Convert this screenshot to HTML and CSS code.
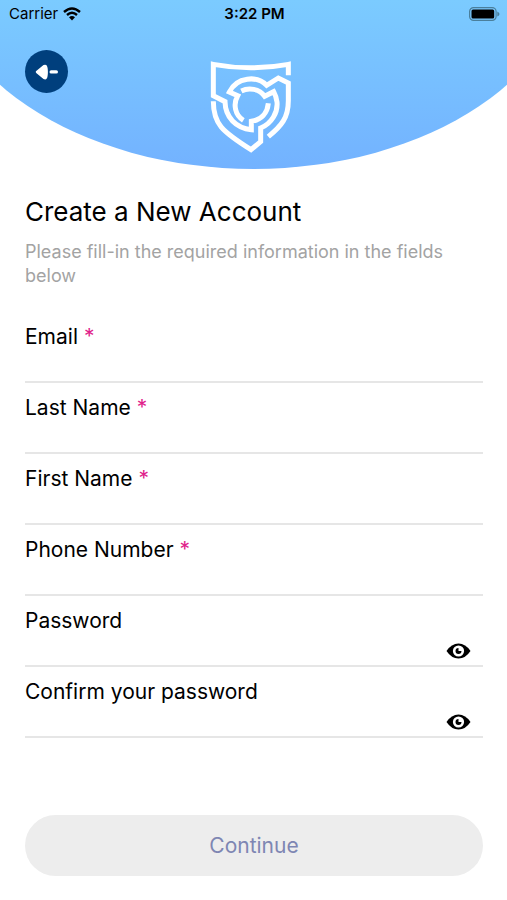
FILE: index.html
```
<!DOCTYPE html>
<html lang="en">
<head>
    <meta charset="UTF-8">
    <meta name="viewport" content="width=device-width, initial-scale=1.0">
    <title>Create a New Account</title>
    <link rel="stylesheet" href="styles.css">
</head>
<body>
    <header class="header">
        <div class="status-bar">
            <div class="carrier">
                <span>Carrier</span>
                <svg class="wifi" viewBox="0 0 18 14" aria-hidden="true">
                    <path d="M1 5 Q9 -2 17 5" />
                    <path d="M4 8 Q9 3.600 14 8" />
                    <path class="wifi-dot" d="M6 10.200 Q9 7.600 12 10.200 L9 13.500 Z" />
                </svg>
            </div>
            <div class="time">3:22 PM</div>
            <div class="battery">
                <svg viewBox="0 0 31 14" aria-hidden="true">
                    <rect class="battery-case" x="0.600" y="0.600" width="26.500" height="12.800" rx="4" />
                    <rect x="2.500" y="2.500" width="22.700" height="9" rx="1.500" />
                    <path class="battery-tip" d="M28.300 4.500 Q30.500 5.500 30.500 7 Q30.500 8.500 28.300 9.500 Z" />
                </svg>
            </div>
        </div>
        <div class="header-row">
            <button class="back" type="button" aria-label="Back">
                <svg viewBox="0 0 24 16" aria-hidden="true">
                    <path d="M1.500 6.800 L8.500 1 Q12 -0.500 12.600 4 Q13.200 8 12.600 12 Q12 16.500 8.500 15 L1.500 9.200 Q0 8 1.500 6.800 Z" />
                    <rect x="14.500" y="6.200" width="8.500" height="3.400" rx="1.700" />
                </svg>
            </button>
            <svg class="logo" viewBox="60 45 246 285" aria-hidden="true">
                <path d="M295 94 V61 Q182 82 70 61 V155 L105 173 C106 220 138 253 184 257 V232 C214 228 232 208 235 178" />
                <path d="M70 172 C70 240 96 262 183 317 L212 293 V252 C246 238 264 204 261 174 Q259 158 251 143 L224 157 C208 134 176 130 154 141" />
                <path d="M160 229 C136 214 128 182 143 155 L118 144 C140 98 202 94 230 124 L265 102 L295 117 V170 C295 222 274 246 235 278" />
            </svg>
        </div>
    </header>

    <main class="content">
        <h1>Create a New Account</h1>
        <p class="intro">Please fill-in the required information in the fields below</p>

        <form class="form">
            <div class="field">
                <label for="email">Email <span class="required">*</span></label>
                <input id="email" type="email" required>
            </div>
            <div class="field">
                <label for="last-name">Last Name <span class="required">*</span></label>
                <input id="last-name" type="text" required>
            </div>
            <div class="field">
                <label for="first-name">First Name <span class="required">*</span></label>
                <input id="first-name" type="text" required>
            </div>
            <div class="field">
                <label for="phone">Phone Number <span class="required">*</span></label>
                <input id="phone" type="tel" required>
            </div>
            <div class="field">
                <label for="password">Password</label>
                <div class="password-row">
                    <input id="password" type="password">
                    <button class="eye" type="button" aria-label="Show password">
                        <svg viewBox="0 0 24 16" aria-hidden="true">
                            <path d="M0 8 Q5 0.500 12 0.500 Q19 0.500 24 8 Q19 15.500 12 15.500 Q5 15.500 0 8 Z" />
                            <circle class="eye-white" cx="12" cy="8" r="5.600" />
                            <path d="M12 5 A3 3 0 1 0 15 8 H12 Z" />
                        </svg>
                    </button>
                </div>
            </div>
            <div class="field">
                <label for="confirm">Confirm your password</label>
                <div class="password-row">
                    <input id="confirm" type="password">
                    <button class="eye" type="button" aria-label="Show password">
                        <svg viewBox="0 0 24 16" aria-hidden="true">
                            <path d="M0 8 Q5 0.500 12 0.500 Q19 0.500 24 8 Q19 15.500 12 15.500 Q5 15.500 0 8 Z" />
                            <circle class="eye-white" cx="12" cy="8" r="5.600" />
                            <path d="M12 5 A3 3 0 1 0 15 8 H12 Z" />
                        </svg>
                    </button>
                </div>
            </div>
            <button class="continue" type="submit">Continue</button>
        </form>
    </main>
</body>
</html>
```
FILE: styles.css
```
* {
    box-sizing: border-box;
}

body {
    margin: 0;
    min-height: 100vh;
    display: flex;
    flex-direction: column;
    background: #fff;
    color: #000;
    font-family: Inter, "Open Sans", sans-serif;
}

button {
    border: none;
    padding: 0;
    font-family: inherit;
    cursor: pointer;
}

svg {
    display: block;
}

/* Blue header with the curved bottom edge */
.header {
    padding-bottom: 15px;
    background: linear-gradient(to bottom, #7bcbff, #73b2ff);
    clip-path: ellipse(63% 215px at 50% -46px);
}

.status-bar {
    display: grid;
    grid-template-columns: 1fr auto 1fr;
    align-items: center;
    height: 28px;
    padding: 0 7px 0 9px;
    font-size: 15px;
    line-height: 20px;
}

.carrier {
    display: flex;
    align-items: center;
    gap: 5px;
}

.wifi {
    width: 18px;
    height: 14px;
    fill: none;
    stroke: #000;
    stroke-width: 2.4;
}

.wifi-dot {
    fill: #000;
    stroke: none;
}

.time {
    font-weight: 600;
}

.battery svg {
    width: 31px;
    height: 14px;
    margin-left: auto;
}

.battery-case {
    fill: none;
    stroke: #4a7f9c;
    stroke-width: 1.2;
}

.battery-tip {
    fill: #4a7f9c;
}

.header-row {
    display: grid;
    grid-template-columns: 1fr auto 1fr;
    align-items: start;
    padding: 22px 31px 0 25px;
}

.back {
    display: flex;
    align-items: center;
    justify-content: center;
    width: 43px;
    height: 43px;
    border-radius: 50%;
    background: #003f7d;
}

.back svg {
    width: 24px;
    height: 16px;
    fill: #fff;
}

.logo {
    width: 82px;
    height: 95px;
    margin-top: 9px;
    fill: none;
    stroke: #fff;
    stroke-width: 15;
}

.content {
    flex: 1;
    display: flex;
    flex-direction: column;
    padding: 27px 24px 24px 25px;
}

h1 {
    margin: 0;
    font-size: 26px;
    line-height: 32px;
    font-weight: 400;
}

.intro {
    margin: 12px 0 24px;
    color: #a3a3a3;
    font-size: 18px;
    line-height: 24px;
}

.form {
    flex: 1;
    display: flex;
    flex-direction: column;
}

.field {
    display: flex;
    flex-direction: column;
    height: 71px;
    padding-top: 13px;
    border-bottom: 2px solid #e6e6e6;
    font-size: 21px;
    line-height: 24px;
}

.required {
    color: #e0218a;
}

.field input {
    flex: 1;
    width: 100%;
    min-width: 0;
    padding: 0;
    border: none;
    outline: none;
    background: transparent;
    font-family: inherit;
    font-size: 18px;
}

.password-row {
    flex: 1;
    display: flex;
    align-items: center;
    padding-top: 4px;
}

.eye {
    margin-right: 12px;
    background: transparent;
}

.eye svg {
    width: 25px;
    height: 16px;
}

.eye-white {
    fill: #fff;
}

.continue {
    height: 61px;
    margin-top: auto;
    border-radius: 31px;
    background: #ededed;
    color: #7e86b3;
    font-size: 21px;
}
```
